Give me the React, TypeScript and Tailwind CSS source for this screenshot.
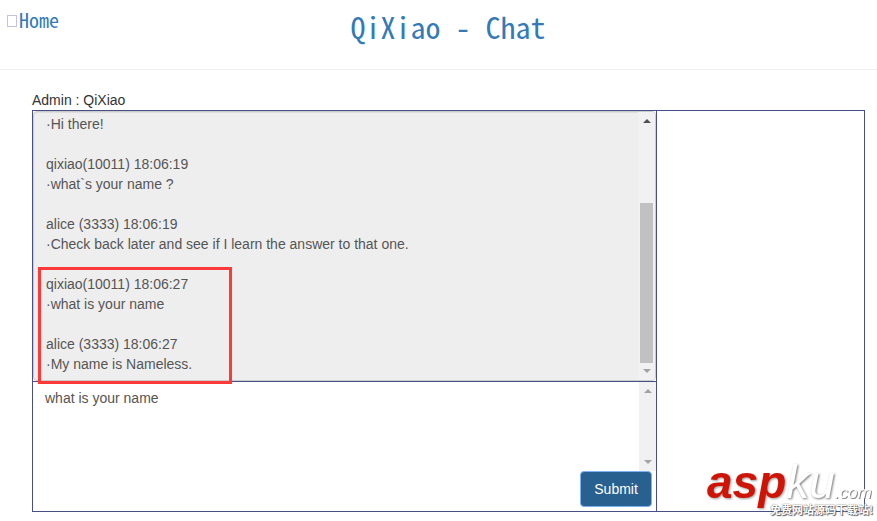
import { useState } from "react";

const messages = [
  "·Hi there!",
  "",
  "qixiao(10011) 18:06:19",
  "·what`s your name ?",
  "",
  "alice (3333) 18:06:19",
  "·Check back later and see if I learn the answer to that one.",
  "",
  "qixiao(10011) 18:06:27",
  "·what is your name",
  "",
  "alice (3333) 18:06:27",
  "·My name is Nameless.",
];

const Arrow = ({ down, dark }: { down?: boolean; dark?: boolean }) => (
  <svg
    width="8"
    height="4"
    viewBox="0 0 8 4"
    className={dark ? "fill-[#505050]" : "fill-[#a3a3a3]"}
  >
    <path d={down ? "M0 0h8L4 4z" : "M0 4h8L4 0z"} />
  </svg>
);

const ScrollBar = ({ thumb }: { thumb?: boolean }) => (
  <div
    aria-hidden="true"
    className="flex w-[17px] shrink-0 flex-col items-center justify-between bg-[#f1f1f1] py-[7px]"
  >
    <Arrow dark={thumb} />
    {thumb && <div className="mt-auto mb-1.5 h-40 w-[13px] bg-[#c1c1c1]" />}
    <Arrow down />
  </div>
);

const Header = () => (
  <header className="grid h-[70px] grid-cols-[1fr_auto_1fr] items-start border-b border-[#eee] pl-[7px] font-['Noto_Sans_CJK_SC',sans-serif] text-[#337ab7] [font-feature-settings:'hwid']">
    <a href="#home" className="flex items-center pt-1.5 text-xl leading-7">
      <span className="mt-0.5 mr-0.5 h-3 w-2.5 border border-[#c3c3dc]" />
      Home
    </a>
    <h1 className="pt-1.5 pl-3 text-3xl leading-10">
      <a href="#chat">QiXiao - Chat</a>
    </h1>
  </header>
);

const Watermark = () => (
  <div className="absolute -right-[9px] -bottom-1 h-[54px] w-[166px] text-white italic">
    <div className="flex items-baseline text-[46px] leading-[42px]">
      <span className="font-bold text-[#cf1406] drop-shadow-[1px_1px_1px_#999]">
        asp
      </span>
      <span className="drop-shadow-[1px_1px_1px_#777]">ku</span>
      <span className="text-[17px] leading-4 drop-shadow-[1px_1px_0px_#888]">
        .com
      </span>
    </div>
    <p className="absolute right-0 bottom-0 font-['Noto_Sans_CJK_SC',sans-serif] text-[11px] leading-3 font-bold whitespace-nowrap not-italic [text-shadow:1px_1px_1px_#555,0_0_1px_#555]">
      免费网站源码下载站!
    </p>
  </div>
);

export default function App() {
  const [text, setText] = useState<string>("what is your name");

  return (
    <div className="overflow-hidden bg-white font-['Liberation_Sans',Arial,sans-serif] text-sm leading-5 text-[#333]">
      <Header />
      <main className="pt-5 pr-3 pb-[9px] pl-8">
        <label htmlFor="transcript" className="block">
          Admin : QiXiao
        </label>
        <div className="relative flex border border-[#474f87]">
          <form
            className="w-[75.1%] border-r border-[#474f87]"
            onSubmit={(e) => e.preventDefault()}
          >
            <div className="relative border-b border-[#474f87]">
              <div className="flex h-[270px] overflow-hidden rounded border border-[#ccc] bg-[#eee] shadow-[inset_0_1px_1px_rgba(0,0,0,0.075)]">
                <textarea
                  id="transcript"
                  readOnly
                  value={messages.join("\n")}
                  className="min-w-0 flex-1 resize-none overflow-hidden px-3 pt-0.5 text-[#555] outline-none"
                />
                <ScrollBar thumb />
              </div>
              <div className="pointer-events-none absolute -bottom-[3px] left-[5px] h-[117px] w-[194px] border-3 border-[#ff3838]" />
            </div>
            <div className="flex h-[89px]">
              <textarea
                aria-label="Message"
                value={text}
                onChange={(e) => setText(e.target.value)}
                className="min-w-0 flex-1 resize-none overflow-hidden px-3 py-1.5 text-[#555] outline-none"
              />
              <ScrollBar />
            </div>
            <div className="flex justify-end pr-1 pb-1">
              <button
                type="submit"
                className="h-9 w-[72px] rounded border border-[#7fb0ef] bg-[#286090] text-white"
              >
                Submit
              </button>
            </div>
          </form>
          <Watermark />
        </div>
      </main>
    </div>
  );
}
